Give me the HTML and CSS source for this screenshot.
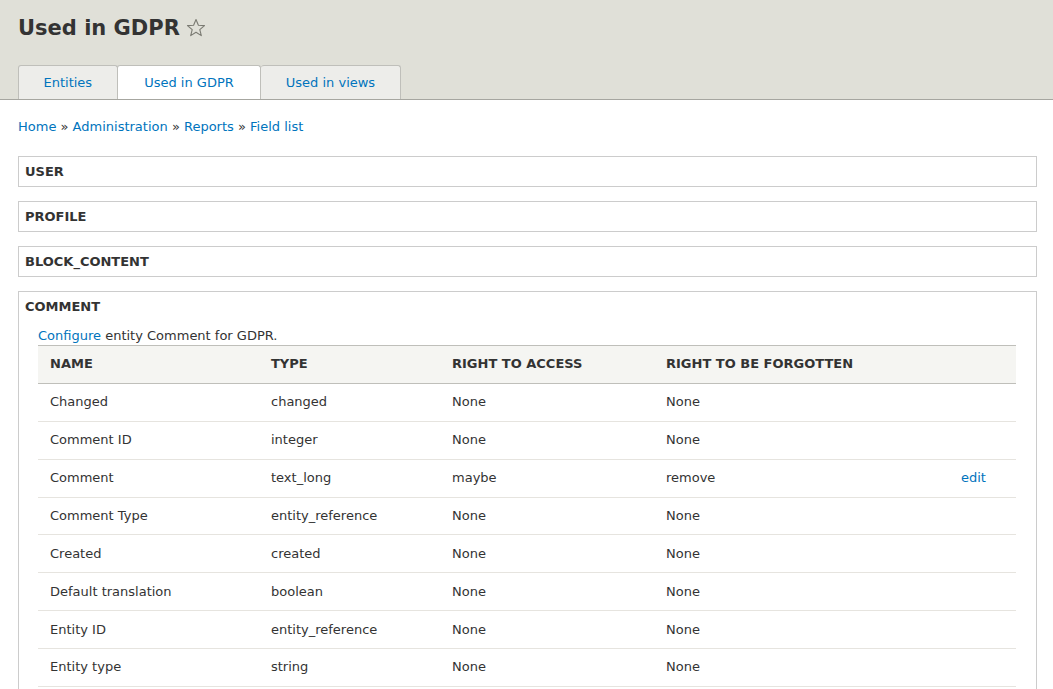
FILE: index.html
```html
<!DOCTYPE html>
<html lang="en">
<head>
<meta charset="utf-8">
<title>Used in GDPR</title>
<link rel="stylesheet" href="styles.css">
</head>
<body>
<header class="page-header">
  <h1 class="page-title">Used in GDPR <svg class="star" width="20" height="20" viewBox="0 0 20 20"><polygon points="10,1.5 12.4,7.2 18.5,7.6 13.8,11.6 15.3,17.6 10,14.3 4.7,17.6 6.2,11.6 1.5,7.6 7.6,7.2" fill="none" stroke="#7a7a72" stroke-width="1.1" stroke-linejoin="round"/></svg></h1>
  <nav class="tabs">
    <a class="tab" href="#">Entities</a>
    <a class="tab active" href="#">Used in GDPR</a>
    <a class="tab" href="#">Used in views</a>
  </nav>
</header>
<main class="content">
  <div class="breadcrumb"><a href="#">Home</a> » <a href="#">Administration</a> » <a href="#">Reports</a> » <a href="#">Field list</a></div>
  <section class="box"><div class="box-title">USER</div></section>
  <section class="box"><div class="box-title">PROFILE</div></section>
  <section class="box"><div class="box-title">BLOCK_CONTENT</div></section>
  <section class="box box-open">
    <div class="box-title">COMMENT</div>
    <div class="box-body">
      <p class="desc"><a href="#">Configure</a> entity Comment for GDPR.</p>
      <table class="fields">
        <colgroup><col class="c1"><col class="c2"><col class="c3"><col class="c4"><col class="c5"></colgroup>
        <thead>
          <tr><th>Name</th><th>Type</th><th>Right to access</th><th>Right to be forgotten</th><th></th></tr>
        </thead>
        <tbody>
          <tr><td>Changed</td><td>changed</td><td>None</td><td>None</td><td></td></tr>
          <tr><td>Comment ID</td><td>integer</td><td>None</td><td>None</td><td></td></tr>
          <tr><td>Comment</td><td>text_long</td><td>maybe</td><td>remove</td><td><a href="#">edit</a></td></tr>
          <tr><td>Comment Type</td><td>entity_reference</td><td>None</td><td>None</td><td></td></tr>
          <tr><td>Created</td><td>created</td><td>None</td><td>None</td><td></td></tr>
          <tr><td>Default translation</td><td>boolean</td><td>None</td><td>None</td><td></td></tr>
          <tr><td>Entity ID</td><td>entity_reference</td><td>None</td><td>None</td><td></td></tr>
          <tr><td>Entity type</td><td>string</td><td>None</td><td>None</td><td></td></tr>
        </tbody>
      </table>
    </div>
  </section>
</main>
</body>
</html>
```

FILE: styles.css
```css
html, body {
  margin: 0;
  padding: 0;
  background: #fff;
}
body {
  font-family: "DejaVu Sans", Verdana, sans-serif;
  font-size: 13px;
  line-height: 18px;
  color: #333;
}
a {
  color: #0074bd;
  text-decoration: none;
}
.page-header {
  background: #e0e0d8;
  padding: 15px 18px 0;
  border-bottom: 1px solid #a6a6a0;
}
.page-title {
  margin: 0 0 24px;
  font-size: 21px;
  line-height: 26px;
  font-weight: bold;
  color: #333;
  display: flex;
  align-items: center;
  gap: 6px;
}
.star {
  display: block;
}
.tabs {
  display: flex;
}
.tab {
  display: block;
  height: 33px;
  line-height: 33px;
  padding: 0 24.5px;
  background: #ededea;
  border: 1px solid #bfbfba;
  border-bottom: none;
  border-left: none;
  border-radius: 3px 3px 0 0;
  color: #0074bd;
}
.tab:first-child {
  border-left: 1px solid #bfbfba;
}
.tab.active {
  background: #fff;
  border-left: 1px solid #bfbfba;
  margin-left: -1px;
  padding: 0 26.5px;
}
.content {
  padding: 0 16px 0 18px;
}
.breadcrumb {
  margin-top: 18px;
  margin-bottom: 20px;
}
.box {
  border: 1px solid #ccc;
  margin-bottom: 14px;
}
.box-title {
  height: 29px;
  line-height: 29px;
  padding: 0 6px;
  font-weight: bold;
}
.box-body {
  padding: 0 20px 30px 19px;
}
.desc {
  margin: 6px 0 0;
}
.fields {
  width: 100%;
  border-collapse: collapse;
  table-layout: fixed;
}
.c1 { width: 221px; }
.c2 { width: 181px; }
.c3 { width: 214px; }
.c4 { width: 295px; }
.c5 { width: 67px; }
.fields thead tr {
  background: #f5f5f2;
  border-top: 1px solid #bfbfba;
  border-bottom: 1px solid #bfbfba;
}
.fields th {
  height: 36px;
  padding: 0 12px 1px;
  text-align: left;
  text-transform: uppercase;
  font-weight: bold;
  white-space: nowrap;
}
.fields tbody tr {
  border-bottom: 1px solid #e6e4df;
}
.fields td {
  height: 36.86px;
  padding: 0 12px;
  white-space: nowrap;
}
```
